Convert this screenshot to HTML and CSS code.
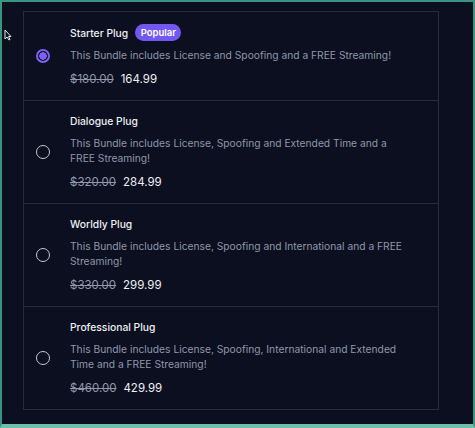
FILE: index.html
```html
<!DOCTYPE html>
<html>
<head>
<meta charset="utf-8">
<link rel="stylesheet" href="styles.css">
</head>
<body>
<div class="frame">
  <svg class="cursor" width="8" height="12" viewBox="0 0 8 12"><path d="M1 1 L1 10 L3 8 L5 11 L6 10.5 L4.5 7.5 L7 7.5 Z" fill="#0b0f1f" stroke="#e8e8e8" stroke-width="1"/></svg>
  <div class="card">
    <label class="row">
      <span class="radio selected"></span>
      <div class="info">
        <div class="title-line"><span class="title">Starter Plug</span><span class="badge">Popular</span></div>
        <p class="desc">This Bundle includes License and Spoofing and a FREE Streaming!</p>
        <div class="price"><s class="old">$180.00</s><span class="new">164.99</span></div>
      </div>
    </label>
    <label class="row">
      <span class="radio"></span>
      <div class="info">
        <div class="title-line"><span class="title">Dialogue Plug</span></div>
        <p class="desc">This Bundle includes License, Spoofing and Extended Time and a FREE Streaming!</p>
        <div class="price"><s class="old">$320.00</s><span class="new">284.99</span></div>
      </div>
    </label>
    <label class="row">
      <span class="radio"></span>
      <div class="info">
        <div class="title-line"><span class="title">Worldly Plug</span></div>
        <p class="desc">This Bundle includes License, Spoofing and International and a FREE Streaming!</p>
        <div class="price"><s class="old">$330.00</s><span class="new">299.99</span></div>
      </div>
    </label>
    <label class="row">
      <span class="radio"></span>
      <div class="info">
        <div class="title-line"><span class="title">Professional Plug</span></div>
        <p class="desc">This Bundle includes License, Spoofing, International and Extended Time and a FREE Streaming!</p>
        <div class="price"><s class="old">$460.00</s><span class="new">429.99</span></div>
      </div>
    </label>
  </div>
</div>
</body>
</html>
```
FILE: styles.css
```css
* { box-sizing: border-box; }
html, body { margin: 0; padding: 0; }
body {
  width: 475px;
  height: 428px;
  background: #0b0f1f;
  font-family: Inter, "Noto Sans", sans-serif;
  overflow: hidden;
}
.frame {
  position: relative;
  width: 475px;
  height: 428px;
  border-left: 2px solid #3a9580;
  border-right: 2px solid #3a9580;
  border-top: 2px solid #3a9580;
  border-bottom: 4px solid #6fbfa8;
  padding: 9px 0 0 21px;
}
.cursor {
  position: absolute;
  left: 2px;
  top: 27px;
}
.card {
  width: 416px;
  border: 1px solid #272c3d;
  display: flex;
  flex-direction: column;
}
.row {
  display: flex;
  align-items: center;
  padding: 12px 30px 12px 12px;
  gap: 20px;
  border-top: 1px solid #272c3d;
}
.row:first-child { border-top: none; }
.radio {
  flex: none;
  width: 14px;
  height: 14px;
  border-radius: 50%;
  border: 1.5px solid #c4c8d0;
}
.radio.selected {
  border: 2px solid #7b62f4;
  background: radial-gradient(circle, #7b62f4 0 3.5px, transparent 4px);
}
.info {
  flex: 1;
  display: flex;
  flex-direction: column;
  gap: 7px;
}
.title-line {
  display: flex;
  align-items: center;
  gap: 7px;
  min-height: 16px;
}
.title {
  color: #eef0f4;
  font-size: 10.3px;
  font-weight: 500;
  line-height: 16px;
}
.badge {
  background: #7258f0;
  color: #fff;
  font-size: 9.5px;
  font-weight: 600;
  line-height: 17px;
  height: 17px;
  padding: 0 5.5px;
  border-radius: 9px;
}
.desc {
  margin: 0;
  color: #8f97ab;
  font-size: 10.25px;
  line-height: 15px;
}
.price {
  display: flex;
  gap: 7px;
  font-size: 11.5px;
  line-height: 18px;
}
.old { color: #8f97ab; }
.new { color: #eef0f4; }
```
